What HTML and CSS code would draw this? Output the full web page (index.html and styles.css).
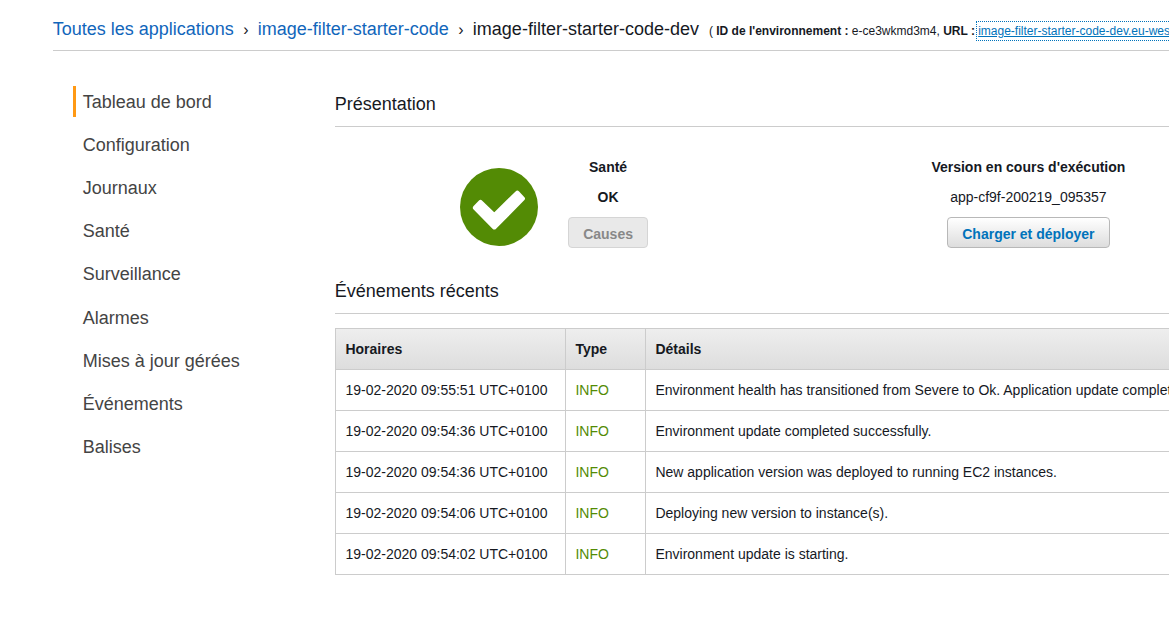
FILE: index.html
```html
<!DOCTYPE html>
<html lang="fr">
<head>
<meta charset="utf-8">
<title>image-filter-starter-code-dev</title>
<link rel="stylesheet" href="styles.css">
</head>
<body>
<header class="breadcrumb">
  <a class="crumb" href="#">Toutes les applications</a>
  <span class="chevron">›</span>
  <a class="crumb" href="#">image-filter-starter-code</a>
  <span class="chevron">›</span>
  <span class="current">image-filter-starter-code-dev</span>
  <span class="env">( <b>ID de l'environnement :</b> e-ce3wkmd3m4, <b>URL :</b></span>
  <a class="env-url" href="#">image-filter-starter-code-dev.eu-wes</a>
</header>
<div class="layout">
  <nav class="side-nav">
    <a class="nav-item active">Tableau de bord</a>
    <a class="nav-item">Configuration</a>
    <a class="nav-item">Journaux</a>
    <a class="nav-item">Santé</a>
    <a class="nav-item">Surveillance</a>
    <a class="nav-item">Alarmes</a>
    <a class="nav-item">Mises à jour gérées</a>
    <a class="nav-item">Événements</a>
    <a class="nav-item">Balises</a>
  </nav>
  <main class="content">
    <h2 class="section-title">Présentation</h2>
    <section class="overview">
      <svg class="health-icon" viewBox="0 0 78 78"><circle cx="39" cy="39" r="39" fill="#538b05"/><path d="M20.5 34.5 34.3 47.8 57.3 25.2 62.4 30.6 34.3 58.9 15.4 39.7Z" fill="#fff" stroke="#fff" stroke-width="5" stroke-linejoin="round"/></svg>
      <div class="health">
        <b class="line">Santé</b>
        <b class="line">OK</b>
        <button class="btn disabled" disabled>Causes</button>
      </div>
      <div class="version">
        <b class="line">Version en cours d'exécution</b>
        <span class="line">app-cf9f-200219_095357</span>
        <button class="btn">Charger et déployer</button>
      </div>
    </section>
    <h2 class="section-title">Événements récents</h2>
    <table class="events">
      <colgroup><col class="col-time"><col class="col-type"><col></colgroup>
      <thead><tr><th>Horaires</th><th>Type</th><th>Détails</th></tr></thead>
      <tbody>
        <tr><td>19-02-2020 09:55:51 UTC+0100</td><td class="info">INFO</td><td>Environment health has transitioned from Severe to Ok. Application update complet</td></tr>
        <tr><td>19-02-2020 09:54:36 UTC+0100</td><td class="info">INFO</td><td>Environment update completed successfully.</td></tr>
        <tr><td>19-02-2020 09:54:36 UTC+0100</td><td class="info">INFO</td><td>New application version was deployed to running EC2 instances.</td></tr>
        <tr><td>19-02-2020 09:54:06 UTC+0100</td><td class="info">INFO</td><td>Deploying new version to instance(s).</td></tr>
        <tr><td>19-02-2020 09:54:02 UTC+0100</td><td class="info">INFO</td><td>Environment update is starting.</td></tr>
      </tbody>
    </table>
  </main>
</div>
</body>
</html>
```
FILE: styles.css
```css
* { box-sizing: border-box; }
body {
  margin: 0;
  height: 626px;
  overflow: hidden;
  background: #fff;
  color: #16191f;
  font: 14px/20px "Liberation Sans", Arial, sans-serif;
}
a { text-decoration: none; }
.breadcrumb {
  display: flex;
  align-items: baseline;
  height: 51px;
  margin-left: 52.7px;
  padding-top: 19px;
  border-bottom: 1px solid #ccc;
  font-size: 18px;
  line-height: 20px;
  white-space: nowrap;
}
.crumb { color: #1166bb; }
.chevron { flex: none; width: 6px; margin: 0 9px; font-size: 16px; text-align: center; }
.env { margin-left: 10px; font-size: 12px; }
.env-url {
  margin-left: 1.2px;
  padding: 0 1px;
  border: 1px dotted #0073bb;
  border-right: 0;
  color: #0073bb;
  font-size: 12px;
  line-height: 18px;
  text-decoration: underline;
}
.layout { display: flex; }
.side-nav {
  display: flex;
  flex: 0 0 261.7px;
  flex-direction: column;
  gap: 12.13px;
  margin-left: 73px;
  padding-top: 34.9px;
}
.nav-item {
  height: 31px;
  padding-left: 6.7px;
  border-left: 3px solid transparent;
  color: #444;
  font-size: 18px;
  line-height: 32px;
}
.active { border-left-color: #ff9914; }
.content { flex: 1; min-width: 0; overflow: hidden; padding-top: 41px; }
.section-title {
  height: 35px;
  margin: 0;
  border-bottom: 1px solid #ccc;
  font-size: 18px;
  font-weight: 400;
  line-height: 24px;
}
.overview { display: flex; height: 152px; padding: 30px 0 0 125.1px; }
.health-icon { flex: none; width: 78px; height: 78px; margin-top: 11px; }
.health { display: flex; flex: none; flex-direction: column; align-items: center; width: 140.6px; }
.version { display: flex; flex: none; flex-direction: column; align-items: center; width: 300px; margin-left: 200px; }
.line { height: 30px; line-height: 20px; }
.btn {
  height: 31px;
  padding: 2px 14px 0;
  border: 1px solid #b8b8b8;
  border-radius: 4px;
  background: linear-gradient(#fff, #ddd);
  color: #0073bb;
  font: bold 14px/20px "Liberation Sans", Arial, sans-serif;
}
.disabled { border-color: #d5d5d5; background: #e9e9e9; color: #888; }
.events {
  width: 1000px;
  margin-top: 14px;
  border-collapse: collapse;
  table-layout: fixed;
}
.col-time { width: 230px; }
.col-type { width: 80px; }
.events th, .events td {
  height: 41px;
  padding: 0 9.75px;
  border: 1px solid #ccc;
  text-align: left;
  white-space: nowrap;
}
.events thead tr { background: linear-gradient(#eee, #ddd); }
.events .info { color: #538b05; }
```
